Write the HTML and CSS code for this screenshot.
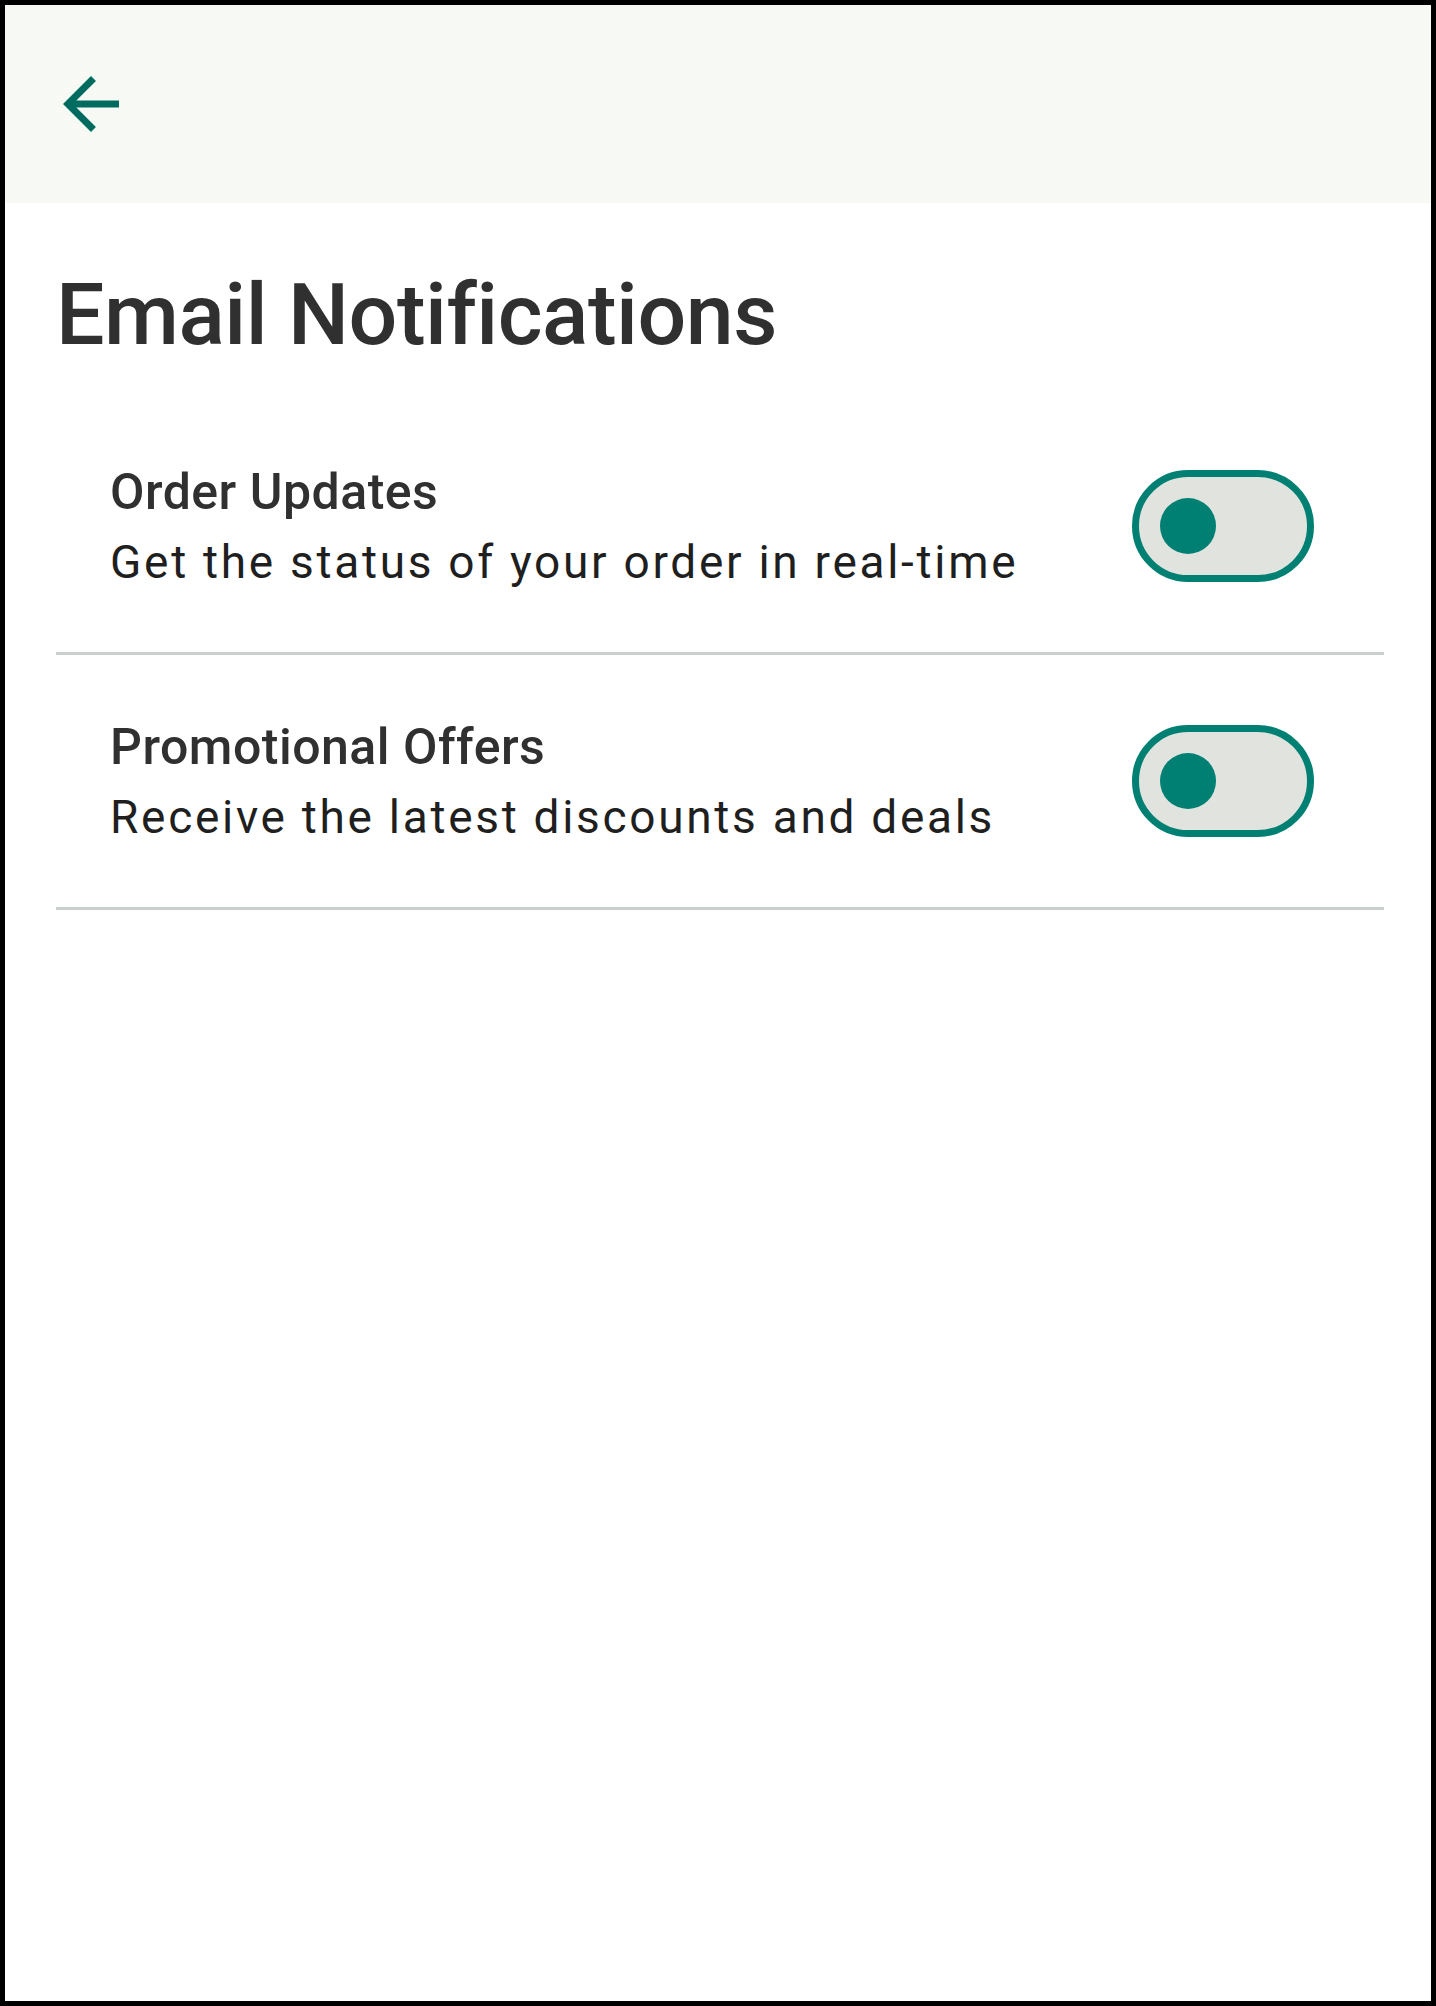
FILE: index.html
```html
<!DOCTYPE html>
<html lang="en">
<head>
    <meta charset="UTF-8">
    <meta name="viewport" content="width=device-width, initial-scale=1.0">
    <title>Email Notifications</title>
    <link rel="stylesheet" href="styles.css">
</head>
<body>

    <div class="frame">
        <div class="top-bar">
            <button class="back-button" aria-label="Back">
                <svg viewBox="0 0 24 24" width="84" height="84">
                    <path d="M20 11H7.83l5.59-5.59L12 4l-8 8 8 8 1.41-1.41L7.83 13H20v-2z"/>
                </svg>
            </button>
        </div>

        <div class="content">
            <h1>Email Notifications</h1>

            <div class="setting-row">
                <div class="setting-text">
                    <div class="setting-title">Order Updates</div>
                    <div class="setting-desc">Get the status of your order in real-time</div>
                </div>
                <span class="toggle"><span class="knob"></span></span>
            </div>

            <div class="setting-row">
                <div class="setting-text">
                    <div class="setting-title">Promotional Offers</div>
                    <div class="setting-desc">Receive the latest discounts and deals</div>
                </div>
                <span class="toggle"><span class="knob"></span></span>
            </div>
        </div>
    </div>

</body>
</html>
```

FILE: styles.css
```css
body {
    margin: 0;
    padding: 0;
    background: #000;
    font-family: Roboto, "Liberation Sans", sans-serif;
    color: #2f302f;
}
.frame {
    box-sizing: border-box;
    min-height: 100vh;
    border: 5px solid #000;
    background: #fff;
}
.top-bar {
    height: 198px;
    background: #f7f9f5;
    display: flex;
    align-items: center;
    padding-left: 44px;
}
.back-button {
    background: none;
    border: none;
    padding: 0;
    display: flex;
}
.back-button svg {
    fill: #006c60;
}
.content {
    padding: 0 47px 0 51px;
}
h1 {
    margin: 60px 0 34px 0;
    font-size: 86px;
    font-weight: 500;
    line-height: 103px;
    letter-spacing: -0.5px;
}
.setting-row {
    display: flex;
    align-items: center;
    justify-content: space-between;
    height: 252px;
    padding: 0 70px 0 54px;
    border-bottom: 3px solid #c8cfcc;
}
.setting-text {
    display: flex;
    flex-direction: column;
    gap: 13px;
}
.setting-title {
    font-size: 50px;
    font-weight: 500;
    line-height: 60px;
    letter-spacing: 0.5px;
    color: #2f302f;
}
.setting-desc {
    font-size: 46px;
    line-height: 55px;
    letter-spacing: 2.7px;
    color: #1f1f1f;
}
.toggle {
    box-sizing: border-box;
    width: 182px;
    height: 112px;
    border: 7px solid #007f73;
    border-radius: 56px;
    background: #e0e3de;
    display: flex;
    align-items: center;
    padding-left: 21px;
}
.knob {
    width: 56px;
    height: 56px;
    border-radius: 50%;
    background: #007f73;
}
```
